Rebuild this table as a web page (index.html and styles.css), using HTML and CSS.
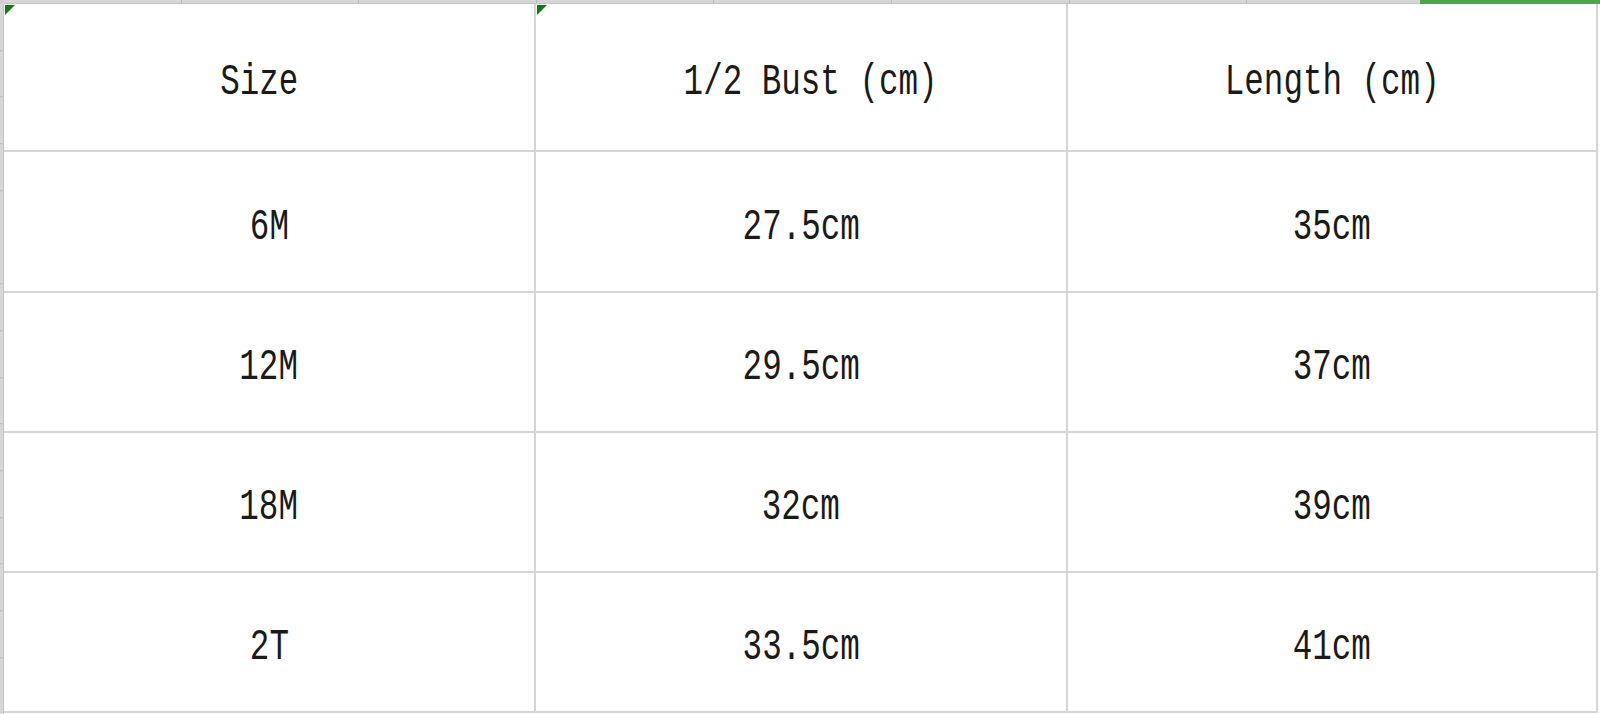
FILE: index.html
```html
<!DOCTYPE html>
<html>
<head>
<meta charset="utf-8">
<link rel="stylesheet" href="styles.css">
</head>
<body>
<div class="sheet">
  <div class="corner"></div>
  <div class="colheads"><div class="sel"></div></div>
  <div class="rowheads"></div>
  <div class="table">
    <div class="cell head note"><span class="t">Size </span></div>
    <div class="cell head note"><span class="t"> 1/2 Bust (cm)</span></div>
    <div class="cell head last"><span class="t">Length (cm)</span></div>

    <div class="cell"><span class="t">6M</span></div>
    <div class="cell"><span class="t">27.5cm</span></div>
    <div class="cell last"><span class="t">35cm</span></div>

    <div class="cell"><span class="t">12M</span></div>
    <div class="cell"><span class="t">29.5cm</span></div>
    <div class="cell last"><span class="t">37cm</span></div>

    <div class="cell"><span class="t">18M</span></div>
    <div class="cell"><span class="t">32cm</span></div>
    <div class="cell last"><span class="t">39cm</span></div>

    <div class="cell"><span class="t">2T</span></div>
    <div class="cell"><span class="t">33.5cm</span></div>
    <div class="cell last"><span class="t">41cm</span></div>
  </div>
</div>
</body>
</html>
```

FILE: styles.css
```css
html, body {
  margin: 0;
  padding: 0;
  background: #ffffff;
}

.sheet {
  width: 1600px;
  height: 714px;
  display: grid;
  grid-template-columns: 4px 1fr;
  grid-template-rows: 4px 1fr;
  overflow: hidden;
}

.corner {
  background: #cfcfcf;
}

.colheads {
  position: relative;
  background-color: #d6d6d6;
  background-image: repeating-linear-gradient(to right,
    transparent 0px, transparent 176.6px,
    #b8b8b8 176.6px, #b8b8b8 177.6px);
  border-bottom: 1px solid #c4c4c4;
  box-sizing: border-box;
}

.colheads .sel {
  position: absolute;
  left: 1416px;
  top: 0;
  right: 0;
  height: 4px;
  background: #4aa84a;
}

.rowheads {
  background-color: #d6d6d6;
  background-image: repeating-linear-gradient(to bottom,
    transparent 0px, transparent 45.7px,
    #b8b8b8 45.7px, #b8b8b8 46.7px);
  background-position: 0 0.3px;
  border-right: 1px solid #c4c4c4;
  box-sizing: border-box;
}

.table {
  display: grid;
  grid-template-columns: 532px 532px 530px;
  grid-template-rows: 148px 141px 140px 140px 140px;
}

.cell {
  position: relative;
  box-sizing: border-box;
  border-right: 2px solid #d6d6d6;
  border-bottom: 2px solid #d6d6d6;
  display: flex;
  align-items: center;
  justify-content: center;
  padding-top: 10px;
  font-family: "Liberation Mono", "DejaVu Sans Mono", monospace;
  font-size: 44px;
  color: #1a1a1a;
  line-height: 1;
}

.t {
  display: inline-block;
  white-space: pre;
  transform: scaleX(0.74);
}

.note::before {
  content: "";
  position: absolute;
  left: 1px;
  top: 1px;
  width: 0;
  height: 0;
  border-top: 10px solid #127a12;
  border-right: 10px solid transparent;
}
```
